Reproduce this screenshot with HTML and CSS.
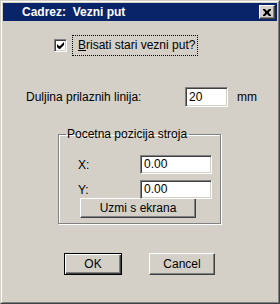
FILE: index.html
```html
<!DOCTYPE html>
<html lang="en">
<head>
    <meta charset="UTF-8">
    <title>Cadrez: Vezni put</title>
    <link rel="stylesheet" href="styles.css">
</head>
<body>
    <div class="window">
        <div class="frame">
            <div class="titlebar">
                <span class="title">Cadrez:&nbsp; Vezni put</span>
                <span class="close">
                    <svg width="8" height="7" viewBox="0 0 8 7">
                        <path d="M0 0h2l2 2 2-2h2v1l-2 2v1l2 2v1h-2l-2-2-2 2h-2v-1l2-2v-1l-2-2z" fill="#000"/>
                    </svg>
                </span>
            </div>
            <div class="content">
                <div class="row check-row">
                    <span class="checkbox">
                        <svg width="7" height="7" viewBox="0 0 7 7">
                            <path d="M0 2v3l2 2h1l4-4v-3l-4 4h-1z" fill="#000"/>
                        </svg>
                    </span>
                    <span class="focus"><u>B</u>risati stari vezni put?</span>
                </div>
                <div class="row length-row">
                    <span class="label">Duljina prilaznih linija:</span>
                    <span class="field field-len">20</span>
                    <span class="unit">mm</span>
                </div>
                <fieldset class="group">
                    <legend>Pocetna pozicija stroja</legend>
                    <div class="group-body">
                        <div class="coord">
                            <span class="coord-label">X:</span>
                            <span class="field field-coord">0.00</span>
                        </div>
                        <div class="coord">
                            <span class="coord-label">Y:</span>
                            <span class="field field-coord">0.00</span>
                        </div>
                        <button class="btn btn-wide">Uzmi s ekrana</button>
                    </div>
                </fieldset>
                <div class="actions">
                    <button class="btn btn-default">OK</button>
                    <button class="btn btn-cancel">Cancel</button>
                </div>
            </div>
        </div>
    </div>
</body>
</html>
```

FILE: styles.css
```css
* {
    margin: 0;
    padding: 0;
    box-sizing: border-box;
}

body {
    background-color: #d4d0c8;
    font-family: "Liberation Sans", Arial, sans-serif;
    font-size: 11px;
    color: #000;
}

.window {
    width: 280px;
    height: 304px;
    border: 1px solid;
    border-color: #d4d0c8 #404040 #404040 #d4d0c8;
}

.frame {
    height: 100%;
    border: 1px solid;
    border-color: #fff #808080 #808080 #fff;
    padding: 1px;
}

.titlebar {
    height: 18px;
    background-color: #0a246a;
    display: flex;
    align-items: center;
    justify-content: space-between;
    padding: 0 2px 0 19px;
}

.title {
    color: #fff;
    font-weight: bold;
    font-size: 12px;
}

.close {
    width: 16px;
    height: 14px;
    background-color: #d4d0c8;
    border: 1px solid;
    border-color: #fff #404040 #404040 #fff;
    box-shadow: inset -1px -1px 0 #808080;
    display: flex;
    align-items: center;
    justify-content: center;
}

.content {
    padding: 15px 0 0 0;
}

.row {
    display: flex;
    align-items: center;
}

.check-row {
    padding-left: 51px;
    height: 18px;
}

.checkbox {
    width: 13px;
    height: 13px;
    background-color: #fff;
    border: 1px solid;
    border-color: #808080 #fff #fff #808080;
    box-shadow: inset 1px 1px 0 #404040, inset -1px -1px 0 #d4d0c8;
    display: flex;
    align-items: center;
    justify-content: center;
}

.focus {
    margin-left: 5px;
    padding: 2px 2px 3px 5px;
    border: 1px dotted #000;
    font-size: 12px;
}

.length-row {
    margin-top: 33px;
    padding-left: 23px;
    height: 20px;
}

.label {
    width: 159px;
    font-size: 12px;
}

.field {
    height: 20px;
    background-color: #fff;
    border: 1px solid;
    border-color: #808080 #fff #fff #808080;
    box-shadow: inset 1px 1px 0 #404040, inset -1px -1px 0 #d4d0c8;
    padding: 3px 0 0 3px;
    font-size: 12px;
    line-height: 13px;
}

.field-len {
    width: 43px;
}

.unit {
    margin-left: 9px;
    font-size: 12px;
}

.group {
    margin: 20px 0 0 55px;
    width: 163px;
    height: 97px;
    border: 1px solid #808080;
    box-shadow: 1px 1px 0 #fff, inset 1px 1px 0 #fff;
}

.group legend {
    margin-left: 7px;
    padding: 0 2px 0 1px;
    font-size: 12px;
}

.group-body {
    padding: 14px 0 0 19px;
}

.coord {
    display: flex;
    align-items: center;
    height: 19px;
    margin-bottom: 6px;
}

.coord-label {
    width: 62px;
    font-size: 12px;
}

.field-coord {
    width: 72px;
    height: 19px;
    padding-top: 2px;
}

.btn {
    font-family: "Liberation Sans", Arial, sans-serif;
    font-size: 12px;
    background-color: #d4d0c8;
    border: 1px solid;
    border-color: #fff #404040 #404040 #fff;
    box-shadow: inset -1px -1px 0 #808080;
    color: #000;
}

.btn-wide {
    width: 116px;
    height: 20px;
    margin: -7px 0 0 2px;
    display: block;
}

.actions {
    display: flex;
    margin-top: 29px;
    padding-left: 61px;
}

.btn-default {
    width: 58px;
    height: 22px;
    border: 1px solid #000;
    box-shadow: inset 1px 1px 0 #fff, inset -1px -1px 0 #404040, inset -2px -2px 0 #808080;
}

.btn-cancel {
    width: 66px;
    height: 22px;
    margin-left: 27px;
}
```
